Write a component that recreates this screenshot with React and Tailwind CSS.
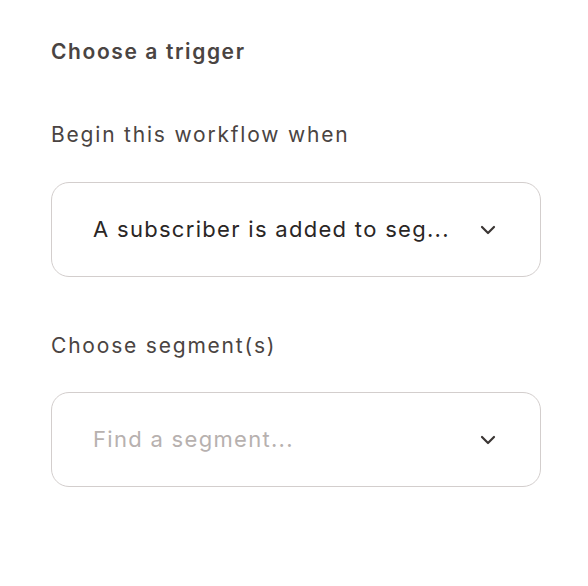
import React from 'react';

const Chevron = () => (
  <svg width="16" height="10" viewBox="0 0 16 10" fill="none" className="shrink-0">
    <path d="M2 2l6 6 6-6" stroke="#3b3634" strokeWidth="2.2" strokeLinecap="round" strokeLinejoin="round" />
  </svg>
);

const SelectBox = ({ value, placeholder }) => (
  <div className="flex items-center justify-between h-[95px] w-[490px] rounded-[18px] border-[1.5px] border-[#d3cecd] bg-white pl-[41px] pr-[44px]">
    {value ? (
      <span className="text-[22px] text-[#2a2625] tracking-[1.3px]">{value}</span>
    ) : (
      <span className="text-[22px] text-[#b7b1af] tracking-[1.3px]">{placeholder}</span>
    )}
    <Chevron />
  </div>
);

export default function App() {
  return (
    <div className="min-h-[586px] w-[588px] bg-white font-['Inter',sans-serif] pl-[51px] pt-[37px]">
      <h2 className="text-[21px] font-semibold text-[#4a4442] leading-[30px] tracking-[1.6px]">Choose a trigger</h2>

      <label className="block mt-[53px] text-[21px] text-[#4a4442] leading-[30px] tracking-[1.8px]">Begin this workflow when</label>
      <div className="mt-[32px]">
        <SelectBox value="A subscriber is added to seg..." />
      </div>

      <label className="block mt-[54px] text-[21px] text-[#4a4442] leading-[30px] tracking-[1.8px]">Choose segment(s)</label>
      <div className="mt-[31px]">
        <SelectBox placeholder="Find a segment..." />
      </div>
    </div>
  );
}
